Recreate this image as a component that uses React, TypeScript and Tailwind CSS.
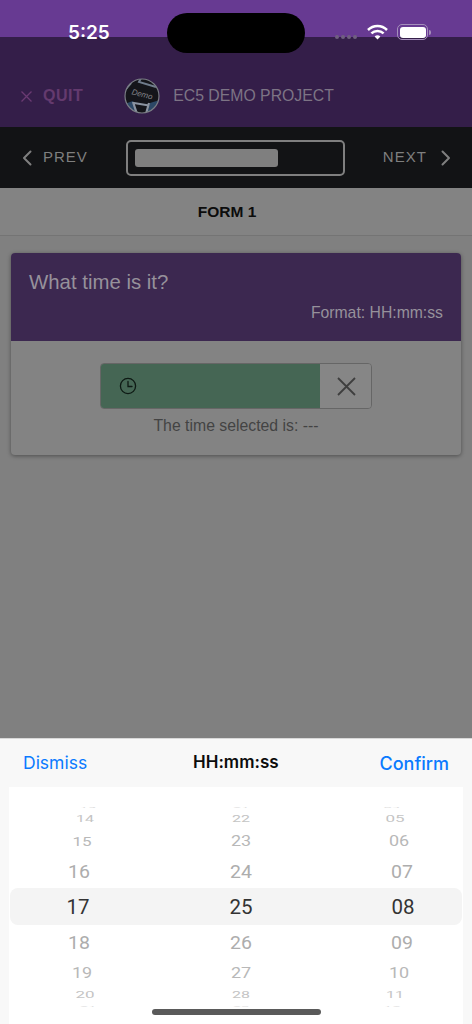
const rows1 = [
  { t: "13", c: "h-[8px] translate-x-[10px] scale-y-[0.12] text-[15px] text-[#dedede]" },
  { t: "14", c: "h-[16px] translate-x-[7px] scale-y-[0.55] text-[16px] text-[#c4c4c4]" },
  { t: "15", c: "h-[28px] translate-x-[4px] scale-y-[0.78] text-[17px] text-[#b8b8b8]" },
  { t: "16", c: "h-[34px] translate-x-[1px] scale-y-[0.95] text-[19.5px] text-[#adadad]" },
  { t: "17", c: "h-[37px] text-[20.5px] text-[#333333]" },
  { t: "18", c: "h-[34px] translate-x-[1px] scale-y-[0.95] text-[19.5px] text-[#adadad]" },
  { t: "19", c: "h-[26px] translate-x-[4px] scale-y-[0.78] text-[18px] text-[#b8b8b8]" },
  { t: "20", c: "h-[18px] translate-x-[7px] scale-y-[0.55] text-[17px] text-[#c4c4c4]" },
  { t: "21", c: "h-[4px] translate-x-[10px] scale-y-[0.12] text-[15px] text-[#dedede]" },
];
const rows2 = [
  { t: "21", c: "h-[8px] scale-y-[0.12] text-[15px] text-[#dedede]" },
  { t: "22", c: "h-[16px] scale-y-[0.55] text-[16px] text-[#c4c4c4]" },
  { t: "23", c: "h-[28px] scale-y-[0.78] text-[18px] text-[#b8b8b8]" },
  { t: "24", c: "h-[34px] scale-y-[0.95] text-[19.5px] text-[#adadad]" },
  { t: "25", c: "h-[37px] text-[20.5px] text-[#333333]" },
  { t: "26", c: "h-[34px] scale-y-[0.95] text-[19.5px] text-[#adadad]" },
  { t: "27", c: "h-[26px] scale-y-[0.78] text-[18px] text-[#b8b8b8]" },
  { t: "28", c: "h-[18px] scale-y-[0.55] text-[16px] text-[#c4c4c4]" },
  { t: "29", c: "h-[4px] scale-y-[0.12] text-[15px] text-[#dedede]" },
];
const rows3 = [
  { t: "04", c: "h-[8px] translate-x-[-11px] scale-y-[0.12] text-[15px] text-[#dedede]" },
  { t: "05", c: "h-[16px] translate-x-[-8px] scale-y-[0.55] text-[17px] text-[#c4c4c4]" },
  { t: "06", c: "h-[28px] translate-x-[-4px] scale-y-[0.78] text-[18px] text-[#b8b8b8]" },
  { t: "07", c: "h-[34px] translate-x-[-1px] scale-y-[0.95] text-[19.5px] text-[#adadad]" },
  { t: "08", c: "h-[37px] text-[20.5px] text-[#333333]" },
  { t: "09", c: "h-[34px] translate-x-[-1px] scale-y-[0.95] text-[19.5px] text-[#adadad]" },
  { t: "10", c: "h-[26px] translate-x-[-4px] scale-y-[0.78] text-[18px] text-[#b8b8b8]" },
  { t: "11", c: "h-[18px] translate-x-[-8px] scale-y-[0.55] text-[16px] text-[#c4c4c4]" },
  { t: "12", c: "h-[4px] translate-x-[-11px] scale-y-[0.12] text-[15px] text-[#dedede]" },
];

function Wheel({ rows, w }: { rows: { t: string; c: string }[]; w: string }) {
  return (
    <div className={`flex flex-col ${w}`}>
      {rows.map((r) => (
        <div key={r.t} className={`flex items-center justify-center leading-none ${r.c}`}>
          {r.t}
        </div>
      ))}
    </div>
  );
}

function Chevron({ left }: { left?: boolean }) {
  return (
    <svg width="10" height="16" viewBox="0 0 10 16" fill="none" stroke="#7f7f7f" strokeWidth="2" strokeLinecap="round" strokeLinejoin="round">
      <path d={left ? "M8.5 1.5 2 8l6.5 6.5" : "M1.5 1.5 8 8l-6.5 6.5"} />
    </svg>
  );
}

export default function App() {
  return (
    <div className="relative flex h-[1024px] w-[472px] flex-col overflow-hidden bg-[#808080] font-['Liberation_Sans',Arial,sans-serif]">
      <div className="h-[37px] bg-[#673a92]" />

      <div className="flex h-[90px] items-center bg-[#341e49] pt-[28px]">
        <svg className="ml-[21px]" width="11" height="11" viewBox="0 0 11 11" stroke="#6a3a72" strokeWidth="1.3" fill="none">
          <path d="M0.5 0.5l10 10M10.5 0.5l-10 10" />
        </svg>
        <span className="ml-[11px] text-[16px] font-bold tracking-[0.5px] text-[#643a6e]">QUIT</span>
        <svg className="ml-[41px]" width="36" height="36" viewBox="0 0 36 36">
          <defs>
            <clipPath id="logoClip"><circle cx="18" cy="18" r="17" /></clipPath>
          </defs>
          <circle cx="18" cy="18" r="17" fill="#14151a" />
          <g clipPath="url(#logoClip)">
            <path d="M0 26 9 23l3 13H0zM36 22 26 25l-3 11h13z" fill="#2c4866" />
            <path d="M1 12 7 5 M17 0 15 4 32 9" stroke="#6f7c8c" strokeWidth="2" fill="none" />
            <path d="M9 24 13 36 M25 25 22 36 M10 25 25 27.5" stroke="#8a93a0" strokeWidth="2.2" fill="none" />
            <text x="18" y="19" textAnchor="middle" fontSize="8" fontStyle="italic" fill="#85858a" transform="rotate(14 18 17)">Demo</text>
          </g>
          <circle cx="18" cy="18" r="17" fill="none" stroke="#7a7d85" strokeWidth="1.2" />
        </svg>
        <span className="ml-[13px] text-[15.8px] text-[#7d7485]">EC5 DEMO PROJECT</span>
      </div>

      <div className="flex h-[61px] items-center bg-[#121315]">
        <div className="ml-[22px] flex items-center">
          <Chevron left />
          <span className="ml-[11px] text-[15px] font-medium tracking-[1px] text-[#7f7f7f]">PREV</span>
        </div>
        <div className="ml-[38px] flex h-[36px] w-[219px] items-center rounded-[5px] border-2 border-[#7f7f7f] pl-[7px]">
          <div className="h-[18px] w-[143px] rounded-[3px] bg-[#7f7f7f]" />
        </div>
        <div className="ml-[38px] flex items-center">
          <span className="text-[15px] tracking-[1px] text-[#7f7f7f]">NEXT</span>
          <span className="ml-[14px]"><Chevron /></span>
        </div>
      </div>

      <div className="flex h-[48px] items-center justify-center border-b border-b-[#747474] bg-[#838383] pr-[18px] text-[15.5px] font-bold text-[#0c0c0c]">
        FORM 1
      </div>

      <div className="mx-[11px] mt-[17px] flex h-[202px] flex-col overflow-hidden rounded-[4px] bg-[#838383] shadow-[0_1px_4px_rgba(0,0,0,0.4)]">
        <div className="flex h-[88px] flex-col bg-[#3c2850] px-[18px] pt-[17px]">
          <div className="text-[20.4px] leading-[25px] text-[#96919b]">What time is it?</div>
          <div className="mt-[8px] text-right text-[15.75px] leading-[20px] text-[#96919b]">Format: HH:mm:ss</div>
        </div>
        <div className="flex flex-col items-center pt-[22px]">
          <div className="flex h-[46px] w-[272px] overflow-hidden rounded-[4px] border border-[#666666]">
            <div className="flex flex-1 items-center bg-[#456654] pl-[18px]">
              <svg width="18" height="18" viewBox="0 0 18 18" fill="none" stroke="#0e1a14" strokeWidth="1.3" strokeLinecap="round">
                <circle cx="9" cy="9" r="7.6" />
                <path d="M9 4.5V9.5H13" />
              </svg>
            </div>
            <div className="flex w-[51px] items-center justify-center bg-[#868686] pl-[2px]">
              <svg width="19" height="19" viewBox="0 0 19 19" stroke="#3e3e3e" strokeWidth="1.8" fill="none">
                <path d="M1 1l17 17M18 1 1 18" />
              </svg>
            </div>
          </div>
          <div className="mt-[7px] text-[15.8px] leading-[20px] text-[#434343]">The time selected is: ---</div>
        </div>
      </div>

      <div className="mt-auto flex h-[286px] flex-col border-t border-t-[#d8d8d8] bg-[#f8f8f8]">
        <div className="flex h-[48px] items-center justify-between px-[23px] font-['Inter',sans-serif]">
          <span className="text-[17.5px] text-[#0a7aff]">Dismiss</span>
          <span className="ml-[5px] text-[17px] font-semibold text-[#0c0c0c]">HH:mm:ss</span>
          <span className="text-[18px] font-medium text-[#0a7aff]">Confirm</span>
        </div>
        <div className="relative mx-[9px] flex flex-1 flex-col bg-white font-['Roboto',sans-serif]">
          <div className="absolute left-px right-px top-[101px] h-[37px] rounded-[8px] bg-[#f4f4f4]" />
          <div className="relative mt-[16px] flex">
            <Wheel rows={rows1} w="ml-[49px] w-[40px]" />
            <Wheel rows={rows2} w="ml-[123px] w-[40px]" />
            <Wheel rows={rows3} w="ml-[122px] w-[40px]" />
          </div>
        </div>
      </div>

      <div className="absolute left-[68px] top-[32px] -translate-y-1/2 font-['Inter',sans-serif] text-[19px] font-semibold leading-none text-white">5:25</div>
      <div className="absolute left-[167px] top-[13px] h-[40px] w-[138px] rounded-[20px] bg-black" />
      <div className="absolute left-[335px] top-[35px] flex gap-[2px]">
        <div className="h-[4px] w-[4px] rounded-full bg-[#6f5f80]" />
        <div className="h-[4px] w-[4px] rounded-full bg-[#6f5f80]" />
        <div className="h-[4px] w-[4px] rounded-full bg-[#6f5f80]" />
        <div className="h-[4px] w-[4px] rounded-full bg-[#6f5f80]" />
      </div>
      <svg className="absolute left-[367px] top-[24px]" width="21" height="16" viewBox="0 0 21 16" fill="none" stroke="#ffffff" strokeWidth="2.5">
        <path d="M1 6a13.5 13.5 0 0 1 19 0" />
        <path d="M4.4 9.4a8.7 8.7 0 0 1 12.2 0" />
        <path d="M10.5 15.5 7.6 12.6a4.2 4.2 0 0 1 5.8 0z" fill="#ffffff" stroke="none" />
      </svg>
      <div className="absolute left-[397px] top-[24px] flex h-[16px] w-[31px] items-center justify-center rounded-[5px] border border-[#a58fbb]">
        <div className="h-[11px] w-[26px] rounded-[3px] bg-white" />
      </div>
      <div className="absolute left-[429px] top-[30px] h-[5px] w-[1.5px] rounded-r-sm bg-[#a58fbb]" />
      <div className="absolute left-[152px] top-[1009px] h-[6px] w-[169px] rounded-full bg-[#5a5a5a]" />
    </div>
  );
}
